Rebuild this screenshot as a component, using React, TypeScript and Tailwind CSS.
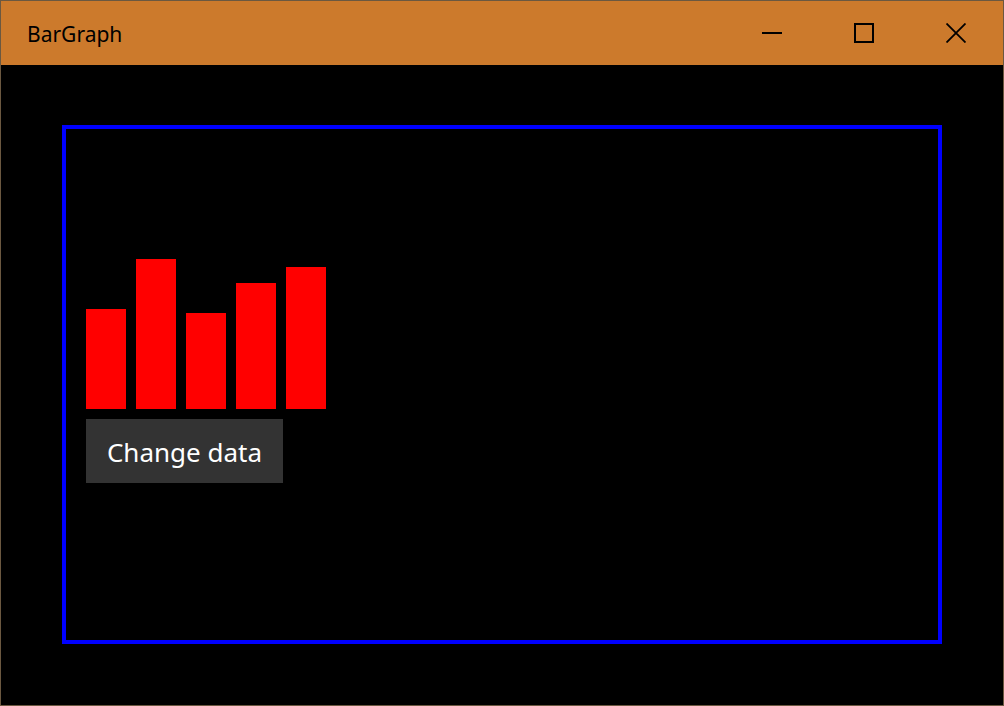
import React from 'react';

const bars = [100, 150, 96, 126, 142];

const TitleButton: React.FC<{ children: React.ReactNode }> = ({ children }) => (
  <div className="w-[92px] h-full flex items-center justify-center">{children}</div>
);

export default function App() {
  return (
    <div className="w-[1004px] h-[706px] border border-[#6b5840] bg-black flex flex-col overflow-hidden">
      <div className="h-[64px] bg-[#cc7a2c] flex items-center shrink-0">
        <span
          className="ml-[26px] mt-[3px] text-[21px] text-black leading-none"
          style={{ fontFamily: '"Segoe UI", "Noto Sans", sans-serif' }}
        >
          BarGraph
        </span>
        <div className="ml-auto flex h-full mr-[1px]">
          <TitleButton>
            <svg width="20" height="20" viewBox="0 0 20 20">
              <rect x="0" y="9" width="20" height="2" fill="#000" />
            </svg>
          </TitleButton>
          <TitleButton>
            <svg width="20" height="20" viewBox="0 0 20 20">
              <rect x="1" y="1" width="18" height="18" fill="none" stroke="#000" strokeWidth="2" />
            </svg>
          </TitleButton>
          <TitleButton>
            <svg width="20" height="20" viewBox="0 0 20 20">
              <path d="M0.5 0.5L19.5 19.5M19.5 0.5L0.5 19.5" stroke="#000" strokeWidth="1.8" />
            </svg>
          </TitleButton>
        </div>
      </div>
      <div className="flex-1">
        <div className="ml-[61px] mt-[60px] w-[880px] h-[519px] border-4 border-[#0000ff] pl-[20px] pt-[130px]">
          <div className="flex items-end gap-[10px] h-[150px]">
            {bars.map((h, i) => (
              <div key={i} className="w-[40px] bg-[#ff0000]" style={{ height: h }} />
            ))}
          </div>
          <button
            className="mt-[10px] w-[197px] h-[64px] bg-[#333333] text-white text-[26px] leading-none flex items-center justify-center pt-[2px]"
            style={{ fontFamily: '"Segoe UI", "Noto Sans", sans-serif' }}
          >
            Change data
          </button>
        </div>
      </div>
    </div>
  );
}
